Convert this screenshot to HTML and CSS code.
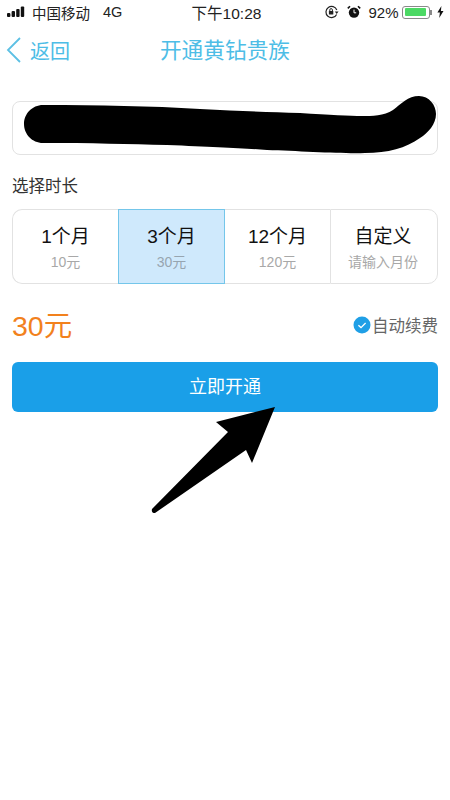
FILE: index.html
```html
<!DOCTYPE html>
<html lang="zh-CN">
<head>
    <meta charset="UTF-8">
    <meta name="viewport" content="width=device-width, initial-scale=1.0">
    <title>开通黄钻贵族</title>
    <link rel="stylesheet" href="styles.css">
</head>
<body>
    <div class="page">
        <div class="status-bar">
            <div class="status-left">
                <svg class="signal" width="22" height="12" viewBox="0 0 22 12">
                    <rect x="0" y="7" width="3.4" height="4" rx="1"/>
                    <rect x="4.6" y="5" width="3.4" height="6" rx="1"/>
                    <rect x="9.2" y="3" width="3.4" height="8" rx="1"/>
                    <rect x="13.8" y="0.5" width="3.4" height="10.5" rx="1"/>
                </svg>
                <span class="carrier">中国移动</span>
                <span class="network">4G</span>
            </div>
            <div class="status-time">下午10:28</div>
            <div class="status-right">
                <svg class="lock-icon" width="15" height="14" viewBox="0 0 15 14">
                    <path d="M12.6 9.4A5.6 5.6 0 1 1 12.8 5" fill="none" stroke="#222" stroke-width="1.2"/>
                    <path d="M10.8 6.6h3.8l-1.9 2.4z" fill="#222"/>
                    <rect x="4.9" y="6" width="4.4" height="3.4" rx="0.5" fill="#222"/>
                    <path d="M5.8 6V4.9a1.3 1.3 0 0 1 2.6 0V6" fill="none" stroke="#222"/>
                </svg>
                <svg class="alarm-icon" width="14" height="14" viewBox="0 0 14 14">
                    <circle cx="7" cy="7.6" r="5.2" fill="#111"/>
                    <path d="M7 4.6v3.2h2.2" fill="none" stroke="#fff" stroke-width="1"/>
                    <path d="M0.8 3.4 3 1.2M13.2 3.4 11 1.2" stroke="#111" stroke-width="1.6"/>
                </svg>
                <span class="percent">92%</span>
                <div class="battery"><div class="battery-fill"></div></div>
                <div class="battery-cap"></div>
                <svg class="bolt" width="7" height="12" viewBox="0 0 7 12">
                    <path d="M4.4 0 0.4 6.6h2.5L2.2 12l4.3-7H3.9z" fill="#111"/>
                </svg>
            </div>
        </div>

        <div class="nav-bar">
            <div class="back">
                <svg width="17" height="28" viewBox="0 0 17 28">
                    <path d="M15 2 3 14l12 12" fill="none" stroke="#5cc0e4" stroke-width="1.8"/>
                </svg>
                <span>返回</span>
            </div>
            <div class="nav-title">开通黄钻贵族</div>
        </div>

        <div class="content">
            <div class="account-box"></div>

            <div class="section-label">选择时长</div>

            <div class="plans">
                <div class="plan">
                    <div class="plan-name">1个月</div>
                    <div class="plan-price">10元</div>
                </div>
                <div class="plan active">
                    <div class="plan-name">3个月</div>
                    <div class="plan-price">30元</div>
                </div>
                <div class="plan">
                    <div class="plan-name">12个月</div>
                    <div class="plan-price">120元</div>
                </div>
                <div class="plan custom">
                    <div class="plan-name">自定义</div>
                    <div class="plan-price">请输入月份</div>
                </div>
            </div>

            <div class="total-row">
                <div class="total">30元</div>
                <div class="renew">
                    <svg width="18" height="18" viewBox="0 0 18 18">
                        <circle cx="9" cy="9" r="8.5" fill="#1f9fe6"/>
                        <path d="M5.4 9.2 8 11.6l4.6-4.6" fill="none" stroke="#fff" stroke-width="1.3"/>
                    </svg>
                    <span>自动续费</span>
                </div>
            </div>

            <button class="open-button">立即开通</button>
        </div>

        <!-- Marks drawn on top of the screenshot -->
        <svg class="marks" width="450" height="800" viewBox="0 0 450 800">
            <path d="M43 105C100 105 150 106 200 109C240 111 270 112 300 113C330 115 350 116 362 116C372 116 384 116 393 110C401 104 408 96 419 96C429 96 436 105 436 114C436 124 428 133 420 138C406 148 388 153 365 153C345 154 300 151 267 150C240 148 215 147 167 145C130 144 90 143 43 143C32 143 24 134 24 124C24 114 32 105 43 105Z" fill="#000"/>
            <path d="M275 407 216 422 228 432 152 509Q151 513 155 513L246 450 252 463Z" fill="#000"/>
        </svg>
    </div>
</body>
</html>
```

FILE: styles.css
```css
body {
    margin: 0;
    padding: 0;
    background-color: #fff;
    font-family: "Liberation Sans", "Noto Sans CJK SC", sans-serif;
}
.page {
    position: relative;
    width: 450px;
    height: 800px;
    overflow: hidden;
}

/* Status bar */
.status-bar {
    display: flex;
    align-items: center;
    justify-content: space-between;
    height: 24px;
    padding: 0 6px 1px 7px;
    color: #222;
    font-size: 14.5px;
}
.status-left,
.status-right {
    display: flex;
    align-items: center;
    width: 150px;
}
.status-right {
    justify-content: flex-end;
}
.signal {
    fill: #111;
    width: 22px;
    margin-right: 3px;
}
.network {
    margin-left: 13px;
}
.status-time {
    margin-left: 2px;
    font-size: 15.5px;
}
.lock-icon {
    margin-right: 8px;
}
.alarm-icon {
    margin-right: 7px;
}
.percent {
    margin-right: 4px;
    font-size: 15px;
}
.battery {
    box-sizing: border-box;
    width: 28px;
    height: 13px;
    padding: 1.5px;
    border: 1px solid #8a8a8a;
    border-radius: 3px;
}
.battery-fill {
    width: 92%;
    height: 100%;
    background-color: #4cd964;
    border-radius: 1px;
}
.battery-cap {
    width: 1.5px;
    height: 5px;
    margin-right: 5px;
    background-color: #8a8a8a;
}

/* Nav bar */
.nav-bar {
    position: relative;
    display: flex;
    align-items: center;
    justify-content: center;
    height: 50px;
    color: #4dbde6;
}
.back {
    position: absolute;
    left: 5px;
    top: 0;
    bottom: 0;
    display: flex;
    align-items: center;
    gap: 8px;
    font-size: 20px;
}
.nav-title {
    padding-bottom: 3px;
    font-size: 21.7px;
}

.content {
    padding: 26px 12px 0;
}

.account-box {
    box-sizing: border-box;
    height: 54px;
    border: 1px solid #e2e2e2;
    border-radius: 8px;
}
.section-label {
    margin-top: 20px;
    color: #333;
    font-size: 16.5px;
    line-height: 22px;
}

/* Month plans */
.plans {
    display: grid;
    grid-template-columns: 106px 107px 105px 108px;
    height: 75px;
    margin-top: 12px;
}
.plan {
    display: flex;
    flex-direction: column;
    align-items: center;
    box-sizing: border-box;
    padding-top: 14px;
    border: 1px solid #e2e2e2;
    border-width: 1px 0;
}
.plan:first-child {
    border-left-width: 1px;
    border-radius: 10px 0 0 10px;
}
.plan.custom {
    padding-right: 2px;
    border-width: 1px;
    border-radius: 0 10px 10px 0;
}
.plan.active {
    background-color: #cfe9fc;
    border: 1.5px solid #74c6ea;
}
.plan-name {
    color: #111;
    font-size: 19px;
    line-height: 26px;
}
.plan-price {
    margin-top: 2px;
    color: #a8a8a8;
    font-size: 14px;
    line-height: 20px;
}
.plan.active .plan-price {
    color: #97a5b0;
}

.total-row {
    display: flex;
    align-items: center;
    justify-content: space-between;
    box-sizing: border-box;
    height: 42px;
    margin-top: 20px;
    padding-bottom: 3px;
}
.total {
    color: #f2811d;
    font-size: 28.5px;
}
.renew {
    display: flex;
    align-items: center;
    gap: 1px;
    margin-top: 3px;
    color: #666;
    font-size: 16.5px;
}

.open-button {
    display: block;
    width: 100%;
    height: 50px;
    margin-top: 16px;
    padding: 0 0 4px;
    background-color: #1a9fe8;
    border: none;
    border-radius: 6px;
    color: #fff;
    font-family: inherit;
    font-size: 18px;
}

.marks {
    position: absolute;
    left: 0;
    top: 0;
    pointer-events: none;
}
```
